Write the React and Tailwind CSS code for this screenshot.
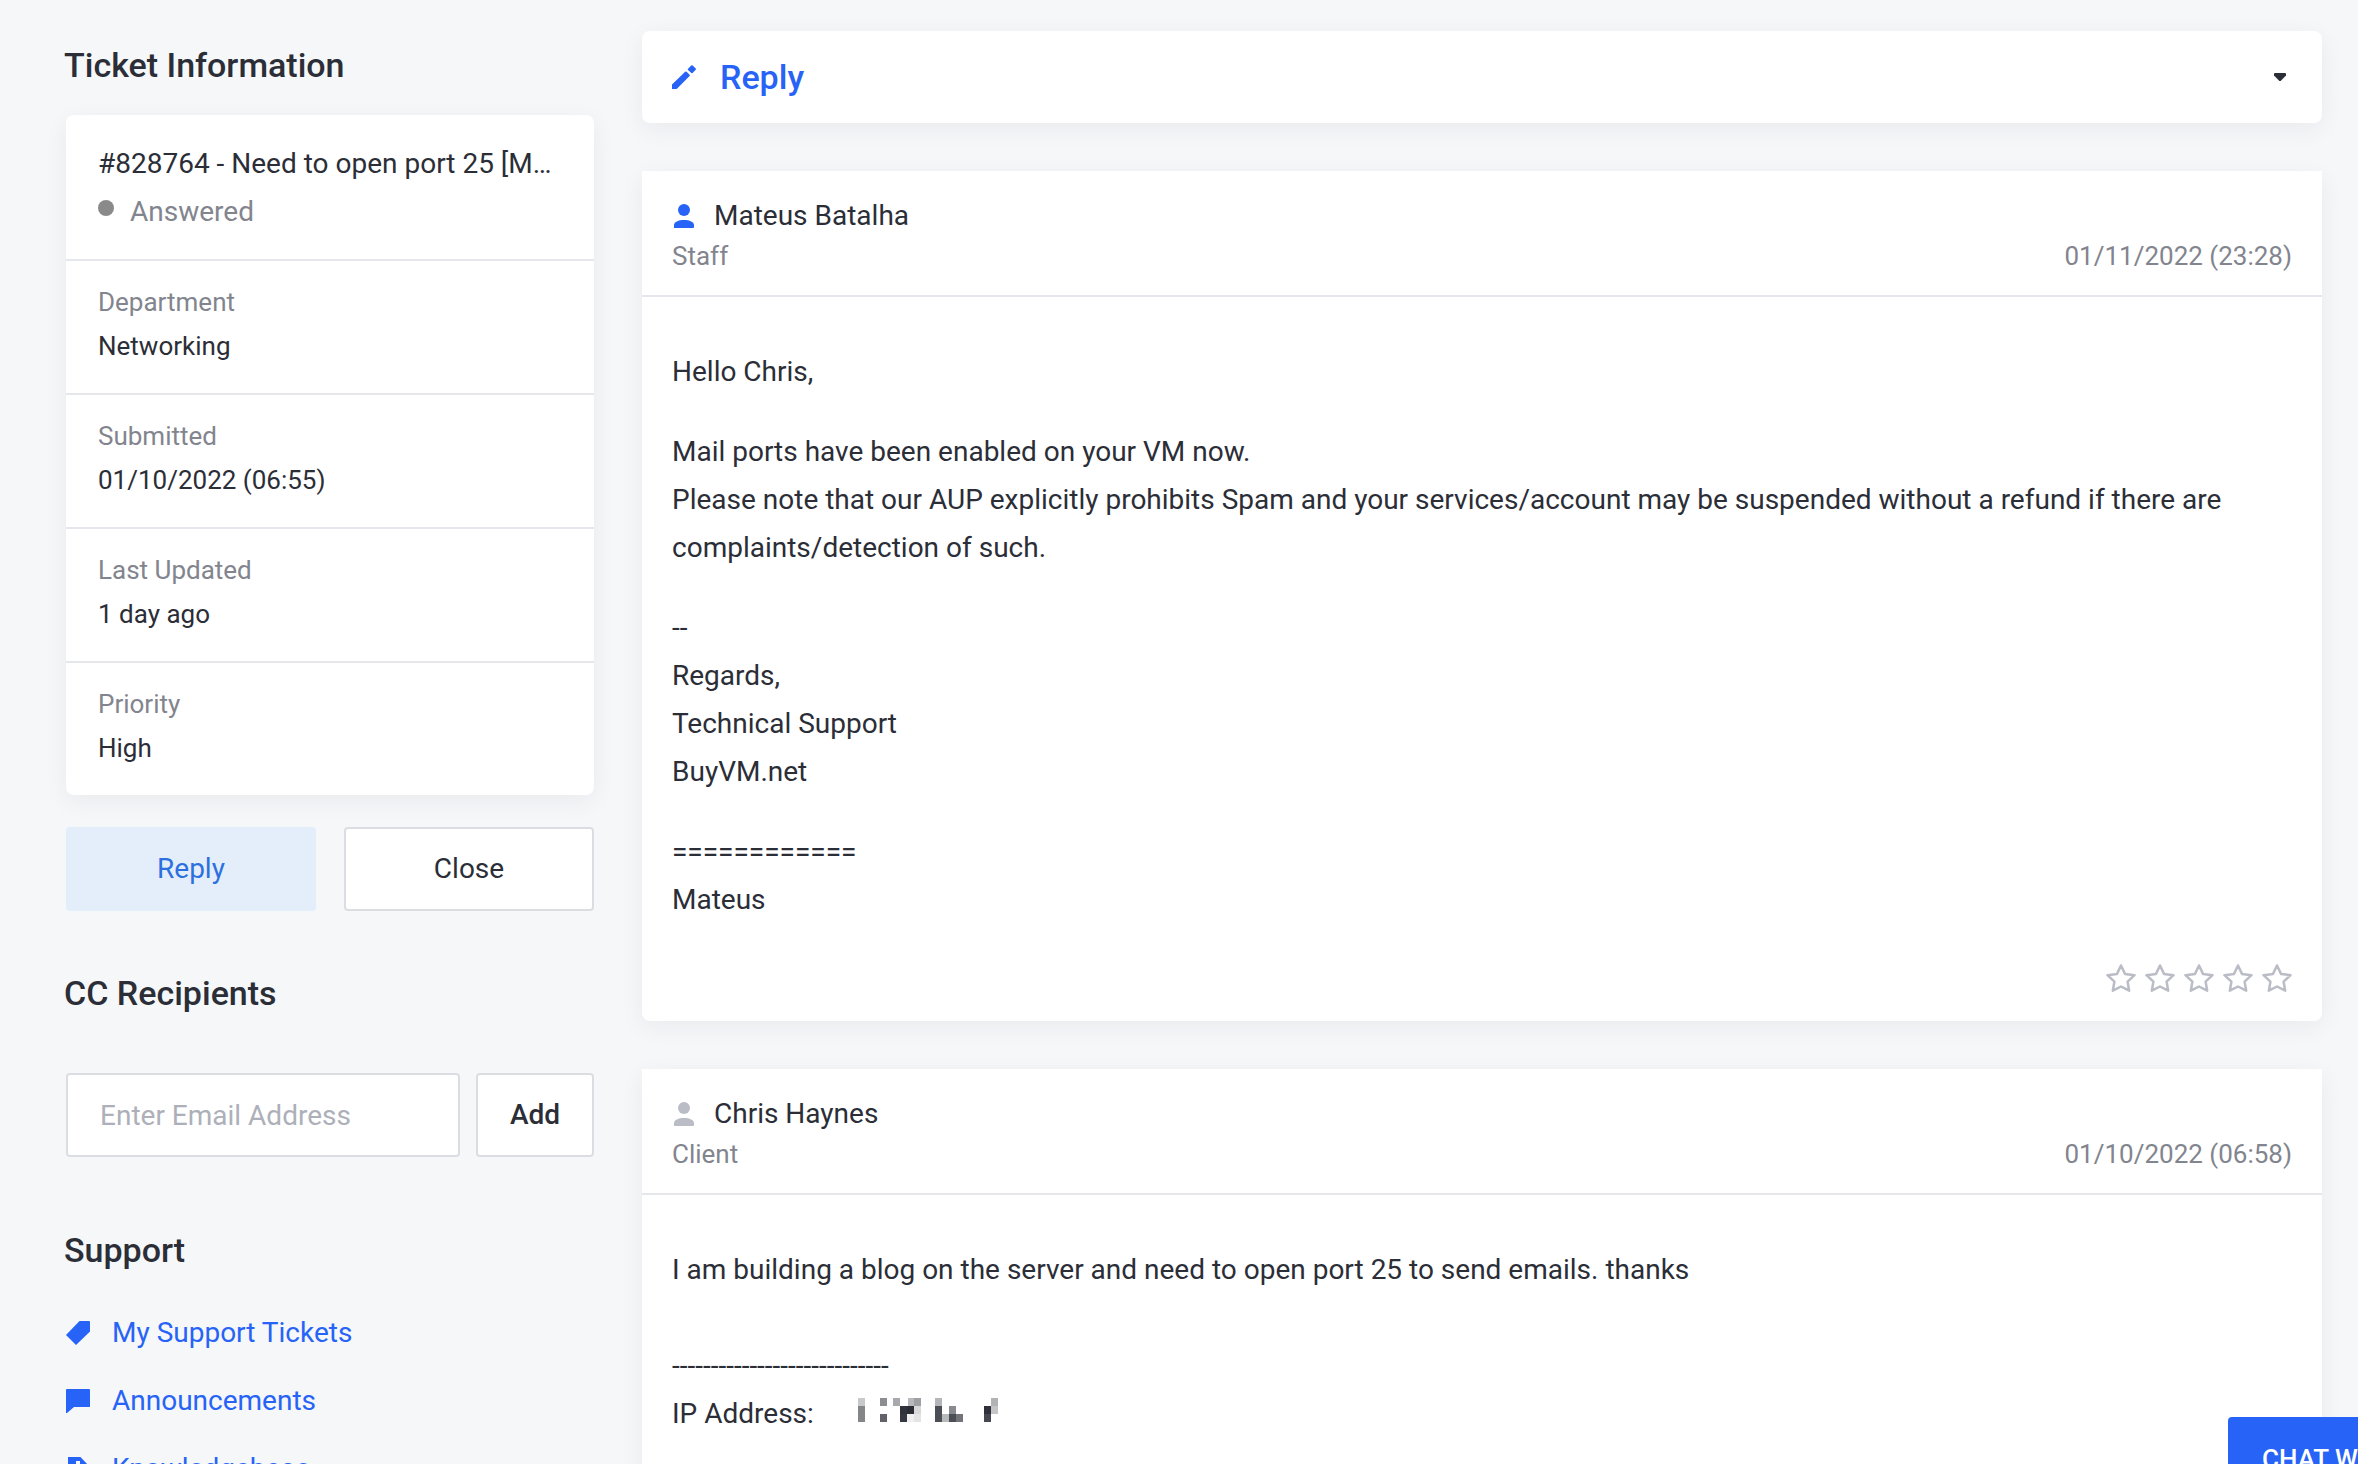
import { useState } from 'react';

const details = [
  { label: 'Department', value: 'Networking' },
  { label: 'Submitted', value: '01/10/2022 (06:55)' },
  { label: 'Last Updated', value: '1 day ago' },
  { label: 'Priority', value: 'High' },
];

// Mosaic blocks that hide the client's IP address: [x, y, color]
const mosaic = [
  [0, 0, '#c8c9cb'], [0, 8, '#85868a'], [0, 16, '#85868a'],
  [22, 0, '#8c8d91'], [22, 16, '#606268'],
  [35, 0, '#a8a9ad'], [50, 0, '#b8b9bd'], [56, 0, '#9fa0a4'],
  [42, 8, '#2f323a'], [49, 8, '#2b2d36'], [56, 8, '#d8d8d9'],
  [42, 16, '#363841'], [49, 16, '#f0f0f0'], [56, 16, '#e4e4e5'],
  [77, 0, '#b5b6ba'], [77, 8, '#4c4e55'], [77, 16, '#4c4e55'],
  [84, 16, '#b8b9bb'], [91, 8, '#898a8f'], [91, 16, '#4c4e55'], [98, 16, '#737479'],
  [133, 0, '#b2b3b7'], [126, 8, '#2f323a'], [133, 8, '#c4c5c7'], [126, 16, '#454850'],
];

const supportLinks = [
  { label: 'My Support Tickets', path: 'M13.500 0H23Q24 0 24 1V10.500L10 24 0 14Z' },
  { label: 'Announcements', path: 'M1 0H23Q24 0 24 1V18H8L1 24H0V1Q0 0 1 0Z' },
  { label: 'Knowledgebase', path: 'M2 0H14.500L22 8V24H2ZM10 4V12H14V4Z' },
];

function PencilIcon() {
  return (
    <svg viewBox="0 0 24 24" className="h-6 w-6 fill-[#2763f6]" aria-hidden="true">
      <path d="M0 19.4 13.200 6.800Q13.900 6.200 14.600 6.800L17.600 9.700Q18.200 10.300 17.600 10.900L5.200 23.400Q4.600 24 3.800 24H0Z" />
      <path d="M15.8 4 19.2.5Q20 0 20.7.5L23.7 3.4Q24.300 4.1 23.700 4.800L20.600 8Q20 8.500 19.400 8L16 4.900Q15.500 4.400 15.800 4Z" />
    </svg>
  );
}

function PersonIcon({ className }) {
  return (
    <svg viewBox="0 0 24 24" className={`h-6 w-6 ${className}`} aria-hidden="true">
      <circle cx="12" cy="6" r="6" />
      <path d="M2 24V21C2 18 6.500 16 12 16S22 18 22 21V23Q22 24 21 24Z" />
    </svg>
  );
}

function StarIcon() {
  return (
    <svg viewBox="0 0 30 28" className="h-7 w-[30px] fill-none stroke-[#babdc6] stroke-[2.5]" strokeLinejoin="round" aria-hidden="true">
      <path d="M15 1.500 19 9.900 28.500 11.200 21.600 17.700 23.200 26.700 15 22.500 6.800 26.700 8.400 17.700 1.500 11.200 11 9.900Z" />
    </svg>
  );
}

function Card({ className = '', children }) {
  return <section className={`bg-white shadow-[0_6px_24px_rgba(30,35,45,0.06)] ${className}`}>{children}</section>;
}

function Heading({ className = '', children }) {
  return <h2 className={`-ml-0.5 text-[34px] leading-[50px] font-medium ${className}`}>{children}</h2>;
}

function Message({ name, role, date, iconClass, children }) {
  return (
    <Card className="rounded-b-lg">
      <header className="flex items-end justify-between border-b-2 border-[#e6e7ec] px-[30px] pt-[25px] pb-[19px] leading-10">
        <div>
          <div className="flex items-center gap-[18px]">
            <PersonIcon className={iconClass} />
            {name}
          </div>
          <div className="text-[26px] text-[#82858e]">{role}</div>
        </div>
        <time className="text-[26px] text-[#82858e]">{date}</time>
      </header>
      {children}
    </Card>
  );
}

export default function App() {
  const [email, setEmail] = useState('');
  const [rating, setRating] = useState(0);

  return (
    <div className="relative flex h-screen items-start gap-12 overflow-hidden bg-[#f5f7f9] pr-9 pl-[66px] font-[Roboto,sans-serif] text-[28px] leading-[48px] text-[#2b2e37]">
      {/* Sidebar */}
      <aside className="w-[528px] shrink-0 pt-10">
        <Heading>Ticket Information</Heading>
        <Card className="mt-[25px] divide-y-2 divide-[#e6e7ec] rounded-lg">
          <div className="px-8 pt-[25px] pb-[23px]">
            <div className="truncate">#828764 - Need to open port 25 [Mail ports]</div>
            <div className="flex items-start gap-4 text-[#82858e]">
              <span className="mt-3 size-4 rounded-full bg-[#8a8a8a]" />
              Answered
            </div>
          </div>
          {details.map((item) => (
            <div key={item.label} className="px-8 pt-[19px] pb-[25px] text-[26px] leading-[44px]">
              <div className="text-[#82858e]">{item.label}</div>
              <div>{item.value}</div>
            </div>
          ))}
        </Card>

        <div className="mt-8 grid grid-cols-2 gap-7">
          <button type="button" className="h-[84px] rounded bg-[#e4eefa] text-[#2c70e0]">Reply</button>
          <button type="button" className="h-[84px] rounded border-2 border-[#dcdde2] bg-white">Close</button>
        </div>

        <Heading className="mt-[57px]">CC Recipients</Heading>
        <form className="mt-[55px] flex gap-4" onSubmit={(e) => e.preventDefault()}>
          <input
            type="email"
            aria-label="Email address"
            placeholder="Enter Email Address"
            value={email}
            onChange={(e) => setEmail(e.target.value)}
            className="h-[84px] min-w-0 flex-1 rounded border-2 border-[#dcdde2] bg-white px-8 placeholder:text-[#adb0b9]"
          />
          <button type="submit" className="h-[84px] w-[118px] rounded border-2 border-[#dcdde2] bg-white font-medium">Add</button>
        </form>

        <Heading className="mt-[68px]">Support</Heading>
        <nav className="mt-[34px] flex flex-col gap-5">
          {supportLinks.map((link) => (
            <a key={link.label} href="#" className="flex items-center gap-[22px] text-[#2763f6]">
              <svg viewBox="0 0 24 24" className="h-6 w-6 fill-current" fillRule="evenodd" aria-hidden="true">
                <path d={link.path} />
              </svg>
              {link.label}
            </a>
          ))}
        </nav>
      </aside>

      {/* Conversation */}
      <main className="flex min-w-0 flex-1 flex-col gap-12 pt-[31px]">
        <Card className="rounded-lg">
          <button type="button" className="flex w-full items-center px-[30px] py-[21px] text-[34px] leading-[50px] font-medium text-[#2763f6]">
            <PencilIcon />
            <span className="ml-6">Reply</span>
            <svg viewBox="0 0 12 8" className="mr-1.5 ml-auto h-2 w-3 fill-[#2b2e37]" aria-hidden="true">
              <path d="M1 0H11Q12 0 12 1V2.500L6.600 8H5.400L0 2.500V1Q0 0 1 0Z" />
            </svg>
          </button>
        </Card>

        <Message name="Mateus Batalha" role="Staff" date="01/11/2022 (23:28)" iconClass="fill-[#2763f6]">
          <div className="space-y-8 px-[30px] pt-[51px]">
            <p>Hello Chris,</p>
            <p>
              Mail ports have been enabled on your VM now.
              <br />
              Please note that our AUP explicitly prohibits Spam and your services/account may be suspended without a refund if there are complaints/detection of such.
            </p>
            <p>
              --
              <br />
              Regards,
              <br />
              Technical Support
              <br />
              BuyVM.net
            </p>
            <p>
              ============
              <br />
              Mateus
            </p>
          </div>
          <div className="flex justify-end gap-[9px] px-[30px] pt-10 pb-[29px]">
            {[1, 2, 3, 4, 5].map((n) => (
              <button key={n} type="button" aria-label={`Rate ${n}`} aria-pressed={rating === n} onClick={() => setRating(n)}>
                <StarIcon />
              </button>
            ))}
          </div>
        </Message>

        <Message name="Chris Haynes" role="Client" date="01/10/2022 (06:58)" iconClass="fill-[#babdc6]">
          <div className="px-[30px] pt-[51px] pb-12">
            <p>I am building a blog on the server and need to open port 25 to send emails. thanks</p>
            <p className="mt-12">----------------------------</p>
            <div className="flex items-start">
              <span>IP Address:</span>
              <svg viewBox="0 0 141 24" className="mt-2 ml-11 h-6 w-[141px]" shapeRendering="crispEdges" aria-hidden="true">
                {mosaic.map(([x, y, color]) => (
                  <rect key={`${x}-${y}`} x={x} y={y} width="7" height="8" fill={color} />
                ))}
              </svg>
            </div>
          </div>
        </Message>
      </main>

      <button type="button" className="fixed right-0 bottom-0 h-[47px] w-[130px] overflow-hidden rounded-tl bg-[#2763f6] pt-[18px] pl-[34px] text-left text-[26px] font-medium whitespace-nowrap text-white">
        CHAT WITH US
      </button>
    </div>
  );
}
